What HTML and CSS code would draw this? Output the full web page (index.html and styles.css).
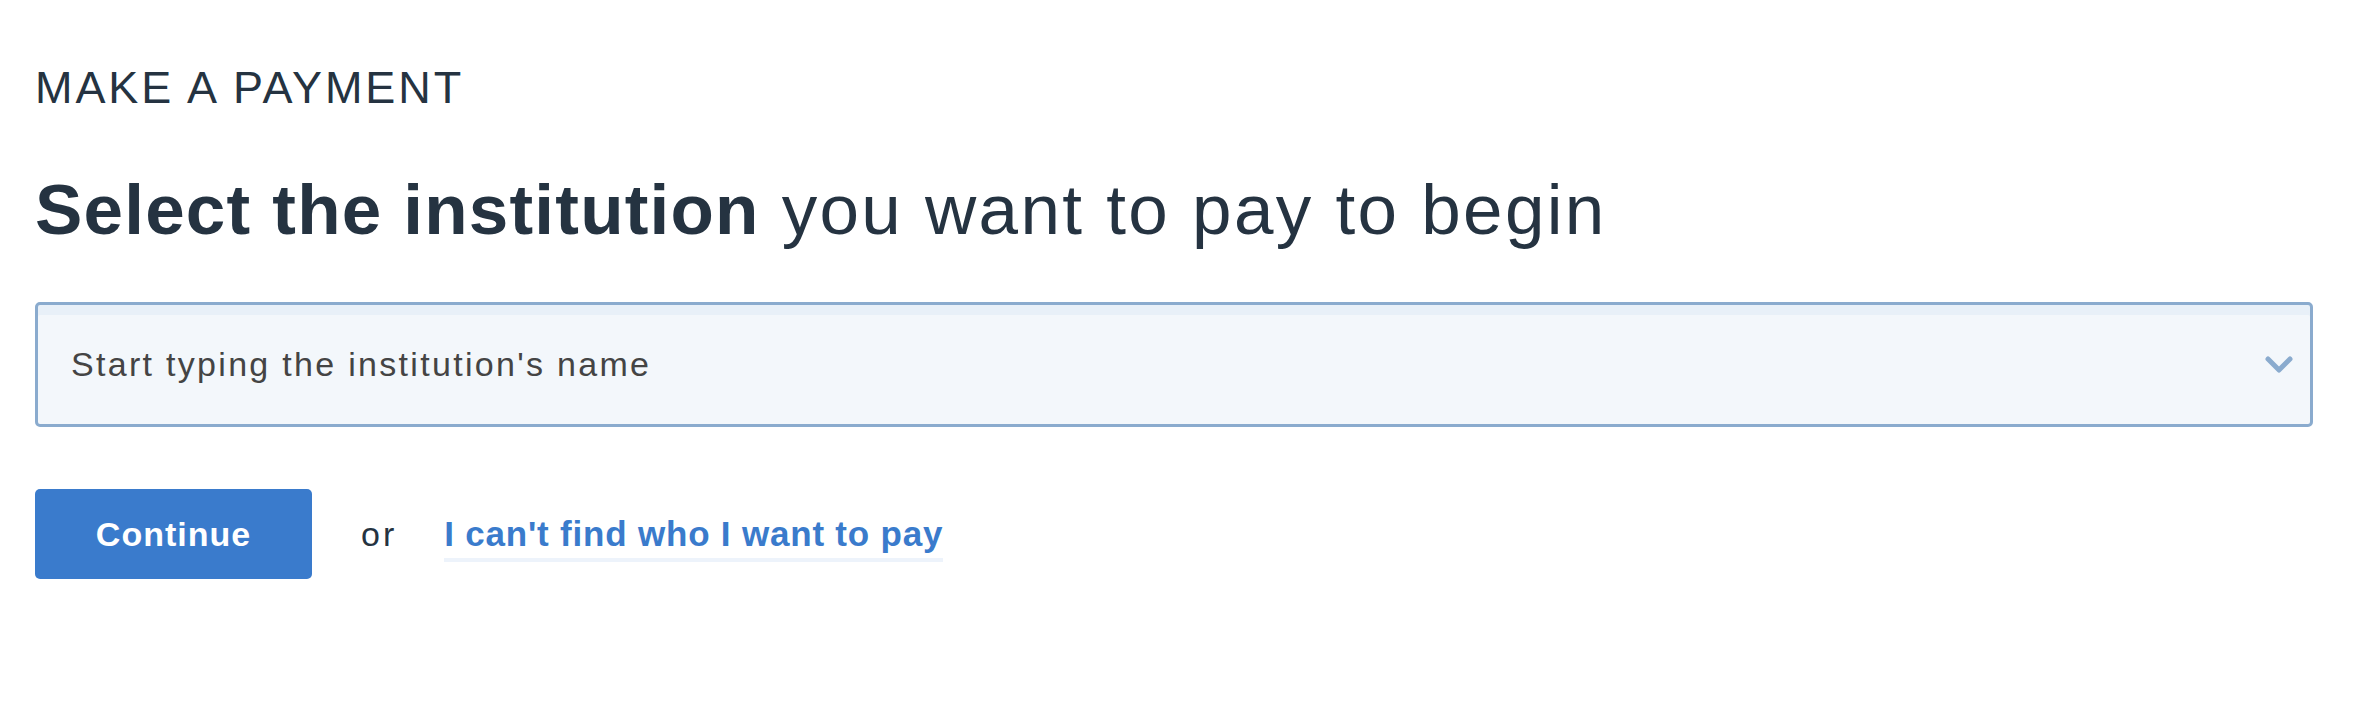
FILE: index.html
```html
<!DOCTYPE html>
<html lang="en">

<head>
    <meta charset="UTF-8">
    <meta name="viewport" content="width=device-width, initial-scale=1.0">
    <title>Make a payment</title>
    <link rel="stylesheet" href="styles.css">
</head>

<body>
    <div class="payment">
        <p class="eyebrow">MAKE A PAYMENT</p>
        <h1 class="title"><b>Select the institution</b> you want to pay to begin</h1>

        <div class="picker">
            <span class="picker_text">Start typing the institution's name</span>
            <svg class="picker_arrow" width="28" height="18" viewBox="0 0 28 18">
                <polyline points="3,3 14,14 25,3" fill="none" stroke="#8aabce" stroke-width="5"
                    stroke-linecap="round" stroke-linejoin="round" />
            </svg>
        </div>

        <div class="actions">
            <a class="btn" href="#">Continue</a>
            <span class="or">or</span>
            <a class="link" href="#">I can't find who I want to pay</a>
        </div>
    </div>
</body>

</html>
```

FILE: styles.css
```css
* {
    margin: 0;
    padding: 0;
    box-sizing: border-box;
}

body {
    font-family: "Liberation Sans", Arial, sans-serif;
    color: #253341;
    background-color: #fff;
}

.payment {
    padding: 61px 67px 0 35px;
}

.eyebrow {
    font-size: 45px;
    line-height: 54px;
    letter-spacing: 2.9px;
}

.title {
    margin-top: 53px;
    font-size: 71px;
    line-height: 84px;
    font-weight: normal;
    letter-spacing: 2.3px;
}

.title b {
    font-weight: bold;
    letter-spacing: 1.2px;
}

/* 下拉选择框 */
.picker {
    display: flex;
    align-items: center;
    justify-content: space-between;
    margin-top: 50px;
    height: 125px;
    padding: 0 17px 0 33px;
    border: 3px solid #8aabce;
    border-radius: 5px;
    background-color: #f3f7fb;
    box-shadow: inset 0 10px 0 #e8f0f8;
}

.picker_text {
    font-size: 34px;
    color: #444;
    letter-spacing: 2.3px;
}

.actions {
    display: flex;
    align-items: baseline;
    margin-top: 62px;
}

.btn {
    display: block;
    width: 277px;
    height: 90px;
    line-height: 90px;
    text-align: center;
    font-size: 34px;
    font-weight: bold;
    letter-spacing: 1px;
    color: #fff;
    background-color: #3a7bcc;
    border-radius: 5px;
    text-decoration: none;
}

.or {
    margin-left: 49px;
    font-size: 34px;
    letter-spacing: 3px;
    color: #253341;
}

.link {
    display: inline-block;
    margin-left: 47px;
    font-size: 35px;
    line-height: 42px;
    font-weight: bold;
    letter-spacing: 0.8px;
    color: #3a7bcc;
    text-decoration: none;
    padding-bottom: 3px;
    border-bottom: 4px solid #edf3fb;
}
```
